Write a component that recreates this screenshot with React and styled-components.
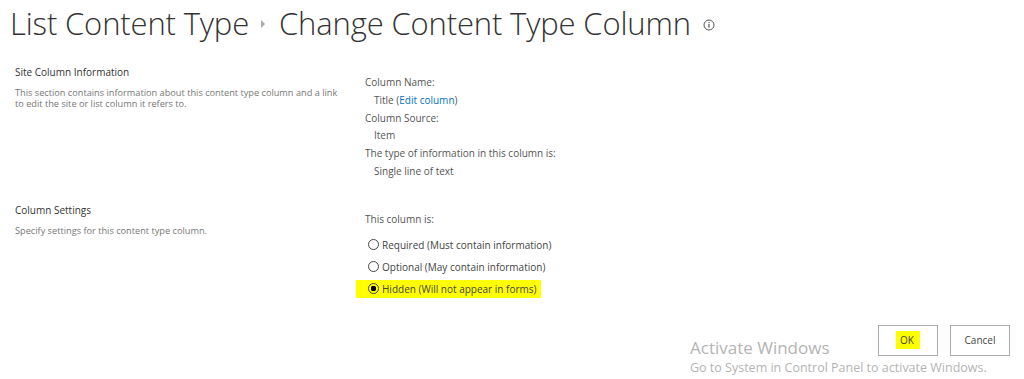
import React from 'react'
import styled, { createGlobalStyle } from 'styled-components'

const GlobalStyle = createGlobalStyle`
  html, body {
    margin: 0;
    padding: 0;
    background: #fff;
  }
  body {
    font-family: 'Open Sans', 'Noto Sans', sans-serif;
    color: #444;
  }
`

const sections = [
  {
    title: 'Site Column Information',
    desc: 'This section contains information about this content type column and a link to edit the site or list column it refers to.',
  },
  {
    title: 'Column Settings',
    desc: 'Specify settings for this content type column.',
  },
]

const options = [
  { label: 'Required (Must contain information)', checked: false },
  { label: 'Optional (May contain information)', checked: false },
  { label: 'Hidden (Will not appear in forms)', checked: true },
]

const Page = styled.div`
  position: relative;
  width: 1024px;
  height: 379px;
  overflow: hidden;
`

const Header = styled.div`
  display: flex;
  align-items: center;
  padding: 2px 0 0 10px;
  height: 42px;
`

const Crumb = styled.h1`
  margin: 0;
  font-size: 31px;
  font-weight: 300;
  color: #333;
  line-height: 40px;
  letter-spacing: -0.15px;
`

const Arrow = styled.span`
  width: 0;
  height: 0;
  margin: 2px 14px 0 12px;
  border-top: 4px solid transparent;
  border-bottom: 4px solid transparent;
  border-left: 4px solid #aaa;
`

const Info = styled.span`
  display: flex;
  margin: 4px 0 0 12px;
`

const Section = styled.div`
  display: grid;
  grid-template-columns: 365px 1fr;
  padding-top: ${p => (p.$second ? '21px' : '20px')};
`

const Left = styled.div`
  padding-left: 15px;
`

const Right = styled.div`
  padding-top: ${p => (p.$second ? '9px' : '10px')};
`

const SectionTitle = styled.div`
  font-size: 10px;
  line-height: 16px;
  color: #333;
`

const Desc = styled.div`
  margin-top: 7px;
  font-size: 9.2px;
  line-height: 11px;
  color: #777;
  width: 328px;
`

const Label = styled.div`
  font-size: 10px;
  line-height: 17.8px;
  color: #555;
`

const Value = styled(Label)`
  padding-left: 9px;
`

const Link = styled.a`
  color: #0072c6;
  text-decoration: none;
`

const Options = styled.div`
  display: flex;
  flex-direction: column;
  align-items: flex-start;
  margin-top: 5px;
`

const Option = styled.label`
  display: flex;
  align-items: center;
  gap: 3px;
  font-size: 10px;
  line-height: 22px;
  color: #444;
  margin-left: ${p => (p.$highlight ? '-9px' : '0')};
  padding: ${p => (p.$highlight ? '0 4px 0 12px' : '0 0 0 3px')};
  background: ${p => (p.$highlight ? '#ffff00' : 'transparent')};
  height: ${p => (p.$highlight ? '18px' : '22px')};
  margin-top: ${p => (p.$highlight ? '2px' : '0')};
`

const Radio = styled.span`
  box-sizing: border-box;
  width: 11px;
  height: 11px;
  border-radius: 50%;
  border: 1px solid #444;
  background: ${p => (p.$checked ? 'radial-gradient(circle, #000 0 2.6px, transparent 3px)' : 'transparent')};
`

const Buttons = styled.div`
  display: flex;
  justify-content: flex-end;
  gap: 12px;
  padding: 27px 14px 0 0;
`

const Button = styled.button`
  box-sizing: border-box;
  width: 60px;
  height: 31px;
  border: 1px solid #ababab;
  background: #fff;
  font-family: 'Open Sans', 'Noto Sans', sans-serif;
  font-size: 10px;
  color: #444;
  padding: 0;
`

const Mark = styled.span`
  display: inline-block;
  background: #ffff00;
  padding: 2px 6px 2px 4px;
`

// windows activation notice sits over the page
const Watermark = styled.div`
  position: absolute;
  left: 690px;
  top: 337px;
  color: #b4b4b4;
  pointer-events: none;
`

const WmTitle = styled.div`
  font-size: 17px;
  line-height: 22px;
`

const WmText = styled.div`
  font-size: 12.5px;
  line-height: 18px;
`

const InfoIcon = () => (
  <svg width="12" height="12" viewBox="0 0 12 12">
    <circle cx="6" cy="6" r="5" fill="none" stroke="#555" strokeWidth="1" />
    <rect x="5.4" y="5" width="1.2" height="3.6" fill="#555" />
    <circle cx="6" cy="3.6" r="0.7" fill="#555" />
  </svg>
)

export default function App() {
  return (
    <Page>
      <GlobalStyle />
      <Header>
        <Crumb>List Content Type</Crumb>
        <Arrow />
        <Crumb>Change Content Type Column</Crumb>
        <Info>
          <InfoIcon />
        </Info>
      </Header>

      <Section>
        <Left>
          <SectionTitle>{sections[0].title}</SectionTitle>
          <Desc>{sections[0].desc}</Desc>
        </Left>
        <Right>
          <Label>Column Name:</Label>
          <Value>
            Title (<Link href="#">Edit column</Link>)
          </Value>
          <Label>Column Source:</Label>
          <Value>Item</Value>
          <Label>The type of information in this column is:</Label>
          <Value>Single line of text</Value>
        </Right>
      </Section>

      <Section $second>
        <Left>
          <SectionTitle>{sections[1].title}</SectionTitle>
          <Desc>{sections[1].desc}</Desc>
        </Left>
        <Right $second>
          <Label>This column is:</Label>
          <Options>
            {options.map(o => (
              <Option key={o.label} $highlight={o.checked}>
                <Radio $checked={o.checked} />
                {o.label}
              </Option>
            ))}
          </Options>
        </Right>
      </Section>

      <Buttons>
        <Button>
          <Mark>OK</Mark>
        </Button>
        <Button>Cancel</Button>
      </Buttons>

      <Watermark>
        <WmTitle>Activate Windows</WmTitle>
        <WmText>Go to System in Control Panel to activate Windows.</WmText>
      </Watermark>
    </Page>
  )
}
